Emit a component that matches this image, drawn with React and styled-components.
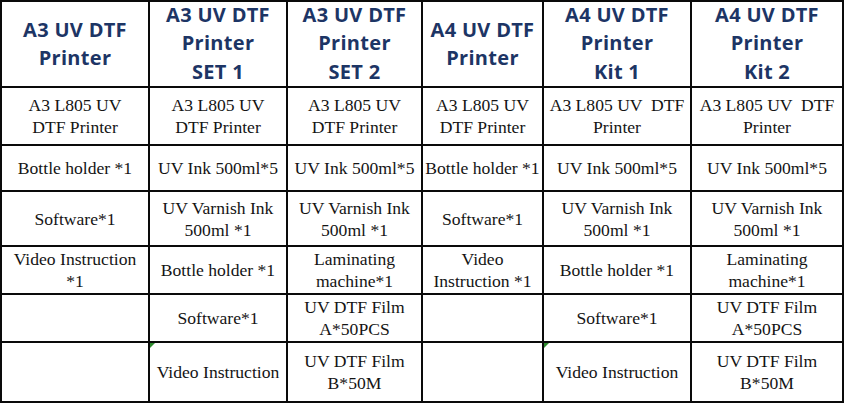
import React from "react";
import styled, { createGlobalStyle } from "styled-components";

const Global = createGlobalStyle`
  html, body { margin: 0; padding: 0; background: #ffffff; }
  #root { width: 846px; height: 404px; overflow: hidden; }
`;

const Grid = styled.div`
  display: grid;
  grid-template-columns: 146px 136px 133px 119px 146px 150px;
  grid-template-rows: 84px 56px 44px 53px 46px 46px 58px;
  gap: 2px;
  padding: 2px;
  background: #0a0a0a;
  width: max-content;
`;

const Cell = styled.div`
  position: relative;
  background: #ffffff;
  display: flex;
  align-items: center;
  justify-content: center;
  text-align: center;
  white-space: pre;
  overflow: visible;
`;

const HeadCell = styled(Cell)`
  font-family: "Open Sans", "Noto Sans", sans-serif;
  font-weight: 700;
  font-size: 20px;
  letter-spacing: 0.3px;
  line-height: 28.5px;
  color: #1d3565;
  padding-bottom: ${(p) => (p.$three ? "1px" : "0")};
`;

const BodyCell = styled(Cell)`
  font-family: "Liberation Serif", Tinos, "DejaVu Serif", "Times New Roman", serif;
  font-size: 17.6px;
  line-height: 22px;
  color: #141414;
`;

const Flag = styled.span`
  position: absolute;
  left: 0;
  top: 0;
  width: 0;
  height: 0;
  border-top: 5px solid #2e8b2e;
  border-right: 5px solid transparent;
`;

const headers = [
  "A3 UV DTF\nPrinter",
  "A3 UV DTF\nPrinter\nSET 1",
  "A3 UV DTF\nPrinter\nSET 2",
  "A4 UV DTF\nPrinter",
  "A4 UV DTF\nPrinter\nKit 1",
  "A4 UV DTF\nPrinter\nKit 2",
];

const rows = [
  [
    "A3 L805 UV\nDTF Printer",
    "A3 L805 UV\nDTF Printer",
    "A3 L805 UV\nDTF Printer",
    "A3 L805 UV\nDTF Printer",
    "A3 L805 UV  DTF\nPrinter",
    "A3 L805 UV  DTF\nPrinter",
  ],
  [
    "Bottle holder *1",
    "UV Ink 500ml*5",
    "UV Ink 500ml*5",
    "Bottle holder *1",
    "UV Ink 500ml*5",
    "UV Ink 500ml*5",
  ],
  [
    "Software*1",
    "UV Varnish Ink\n500ml *1",
    "UV Varnish Ink\n500ml *1",
    "Software*1",
    "UV Varnish Ink\n500ml *1",
    "UV Varnish Ink\n500ml *1",
  ],
  [
    "Video Instruction\n*1",
    "Bottle holder *1",
    "Laminating\nmachine*1",
    "Video\nInstruction *1",
    "Bottle holder *1",
    "Laminating\nmachine*1",
  ],
  ["", "Software*1", "UV DTF Film\nA*50PCS", "", "Software*1", "UV DTF Film\nA*50PCS"],
  ["", "Video Instruction", "UV DTF Film\nB*50M", "", "Video Instruction", "UV DTF Film\nB*50M"],
];

const flagged = { "5-1": true, "5-4": true };

export default function App() {
  return (
    <>
      <Global />
      <Grid>
        {headers.map((h, i) => (
          <HeadCell key={"h" + i} $three={h.split("\n").length === 3}>
            {h}
          </HeadCell>
        ))}
        {rows.map((row, r) =>
          row.map((text, c) => (
            <BodyCell key={r + "-" + c}>
              {flagged[r + "-" + c] && <Flag />}
              {text}
            </BodyCell>
          ))
        )}
      </Grid>
    </>
  );
}
